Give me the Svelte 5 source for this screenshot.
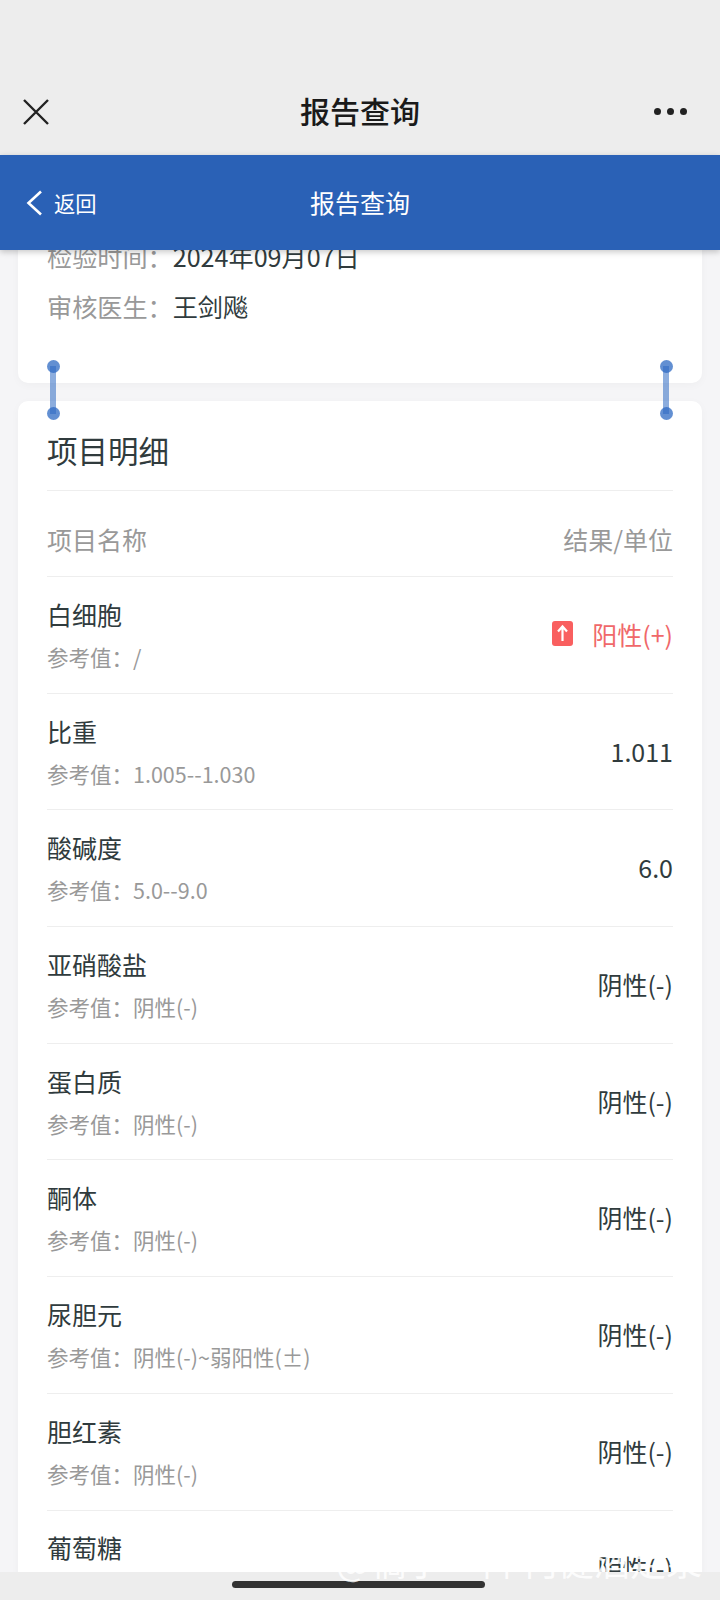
<script lang="ts">
  const items = [
    { name: '白细胞', ref: '/', value: '阳性(+)', high: true },
    { name: '比重', ref: '1.005--1.030', value: '1.011' },
    { name: '酸碱度', ref: '5.0--9.0', value: '6.0' },
    { name: '亚硝酸盐', ref: '阴性(-)', value: '阴性(-)' },
    { name: '蛋白质', ref: '阴性(-)', value: '阴性(-)' },
    { name: '酮体', ref: '阴性(-)', value: '阴性(-)' },
    { name: '尿胆元', ref: '阴性(-)~弱阳性(±)', value: '阴性(-)' },
    { name: '胆红素', ref: '阴性(-)', value: '阴性(-)' },
    { name: '葡萄糖', ref: '阴性(-)', value: '阴性(-)' }
  ];
</script>

<div class="phone">
  <header class="wx-bar">
    <svg class="wx-close" width="28" height="28" viewBox="0 0 28 28">
      <path d="M2 2 L26 26 M26 2 L2 26" stroke="#222" stroke-width="2.4" fill="none" />
    </svg>
    <div class="wx-title">报告查询</div>
    <div class="wx-more"><i></i><i></i><i></i></div>
  </header>

  <nav class="nav">
    <a class="back">
      <svg width="17" height="26" viewBox="0 0 17 26">
        <path d="M15 1.5 L2.5 13 L15 24.5" stroke="#fff" stroke-width="2.6" fill="none" />
      </svg>
      <span>返回</span>
    </a>
    <div class="nav-title">报告查询</div>
  </nav>

  <main class="scroll">
    <section class="card info">
      <div class="info-row"><span class="label">检验时间：</span><span>2024年09月07日</span></div>
      <div class="info-row"><span class="label">审核医生：</span><span>王剑飚</span></div>
    </section>

    <section class="card detail">
      <h2>项目明细</h2>
      <div class="thead"><span>项目名称</span><span>结果/单位</span></div>
      {#each items as item}
        <div class="row">
          <div class="row-left">
            <div class="name">{item.name}</div>
            <div class="ref">参考值：{item.ref}</div>
          </div>
          <div class="value" class:high={item.high}>
            {#if item.high}
              <svg width="21" height="25" viewBox="0 0 21 25">
                <rect width="21" height="25" rx="3" fill="#f95f5f" />
                <path d="M10.5 20 V6 M6 10.5 L10.5 5.5 L15 10.5" stroke="#fff" stroke-width="2.2" fill="none" />
              </svg>
            {/if}
            <span>{item.value}</span>
          </div>
        </div>
      {/each}
    </section>
  </main>

  <footer class="home"><div class="indicator"></div></footer>

  <!-- text selection handles -->
  <div class="handle left"></div>
  <div class="handle right"></div>

  <div class="watermark">@稿小·科 何健酒定浆</div>
</div>

<style>
  :global(body) {
    margin: 0;
  }

  .phone {
    position: relative;
    width: 720px;
    height: 1600px;
    display: flex;
    flex-direction: column;
    overflow: hidden;
    background: #f5f5f7;
    font-family: 'Noto Sans CJK SC', 'Noto Sans', sans-serif;
    color: #303b3d;
  }

  .wx-bar {
    position: relative;
    flex: none;
    height: 155px;
    background: #ededed;
  }

  .wx-title {
    position: absolute;
    left: 0;
    right: 0;
    top: 88px;
    text-align: center;
    font-size: 30px;
    line-height: 44px;
    font-weight: 500;
    color: #1a1a1a;
  }

  .wx-close {
    position: absolute;
    left: 22px;
    top: 98px;
  }

  .wx-more {
    position: absolute;
    left: 654px;
    top: 108px;
    display: flex;
    gap: 6px;
  }

  .wx-more i {
    width: 7px;
    height: 7px;
    border-radius: 50%;
    background: #222;
  }

  .nav {
    position: relative;
    z-index: 2;
    flex: none;
    height: 95px;
    background: #2a61b6;
    box-shadow: 0 2px 6px rgba(0, 0, 0, 0.22);
    color: #fff;
  }

  .back {
    position: absolute;
    left: 26px;
    top: 34px;
    display: flex;
    align-items: center;
    gap: 11px;
    font-size: 21.3px;
    line-height: 28px;
  }

  .nav-title {
    text-align: center;
    font-size: 25px;
    line-height: 95px;
  }

  .scroll {
    flex: 1;
    min-height: 0;
    overflow: hidden;
  }

  .card {
    margin: 0 18px;
    background: #fff;
    border-radius: 10px;
    box-shadow: 0 2px 10px rgba(0, 0, 0, 0.03);
  }

  .info {
    margin-top: -19px;
    height: 152px;
    padding: 0 29px;
    box-sizing: border-box;
  }

  .info-row {
    height: 50px;
    font-size: 25.15px;
    line-height: 50px;
  }

  .label {
    color: #999;
  }

  .detail {
    margin-top: 18px;
    padding: 0 29px;
  }

  h2 {
    margin: 0;
    height: 90px;
    box-sizing: border-box;
    padding-top: 27px;
    font-size: 30.5px;
    line-height: 44px;
    font-weight: 400;
    border-bottom: 1px solid #eeeeee;
  }

  .thead {
    height: 86px;
    box-sizing: border-box;
    padding-top: 10px;
    display: flex;
    justify-content: space-between;
    align-items: center;
    font-size: 25px;
    color: #999;
    border-bottom: 1px solid #eeeeee;
  }

  .row {
    height: 116.7px;
    box-sizing: border-box;
    padding-bottom: 2px;
    display: flex;
    justify-content: space-between;
    align-items: center;
    border-bottom: 1px solid #eeeeee;
  }

  .name {
    font-size: 25px;
    line-height: 36px;
  }

  .ref {
    margin-top: 10px;
    font-size: 21.5px;
    line-height: 30px;
    color: #999;
  }

  .value {
    display: flex;
    align-items: center;
    gap: 19px;
    font-size: 25px;
  }

  .value.high {
    color: #f0686a;
  }

  .home {
    position: relative;
    z-index: 2;
    flex: none;
    height: 28px;
    background: #ededed;
  }

  .indicator {
    width: 253px;
    height: 7px;
    margin: 9px 0 0 232px;
    border-radius: 4px;
    background: #333;
  }

  .handle {
    position: absolute;
    z-index: 3;
    top: 366px;
    width: 6px;
    height: 48px;
    background: rgba(45, 105, 195, 0.55);
  }

  .handle::before,
  .handle::after {
    content: '';
    position: absolute;
    left: -3.5px;
    width: 13px;
    height: 13px;
    border-radius: 50%;
    background: rgba(45, 105, 195, 0.75);
  }

  .handle::before {
    top: -6px;
  }

  .handle::after {
    bottom: -6px;
  }

  .left {
    left: 50px;
  }

  .right {
    left: 663px;
  }

  .watermark {
    position: absolute;
    z-index: 4;
    left: 336px;
    top: 1535px;
    font-size: 36px;
    line-height: 50px;
    white-space: nowrap;
    color: rgba(255, 255, 255, 0.85);
  }
</style>
